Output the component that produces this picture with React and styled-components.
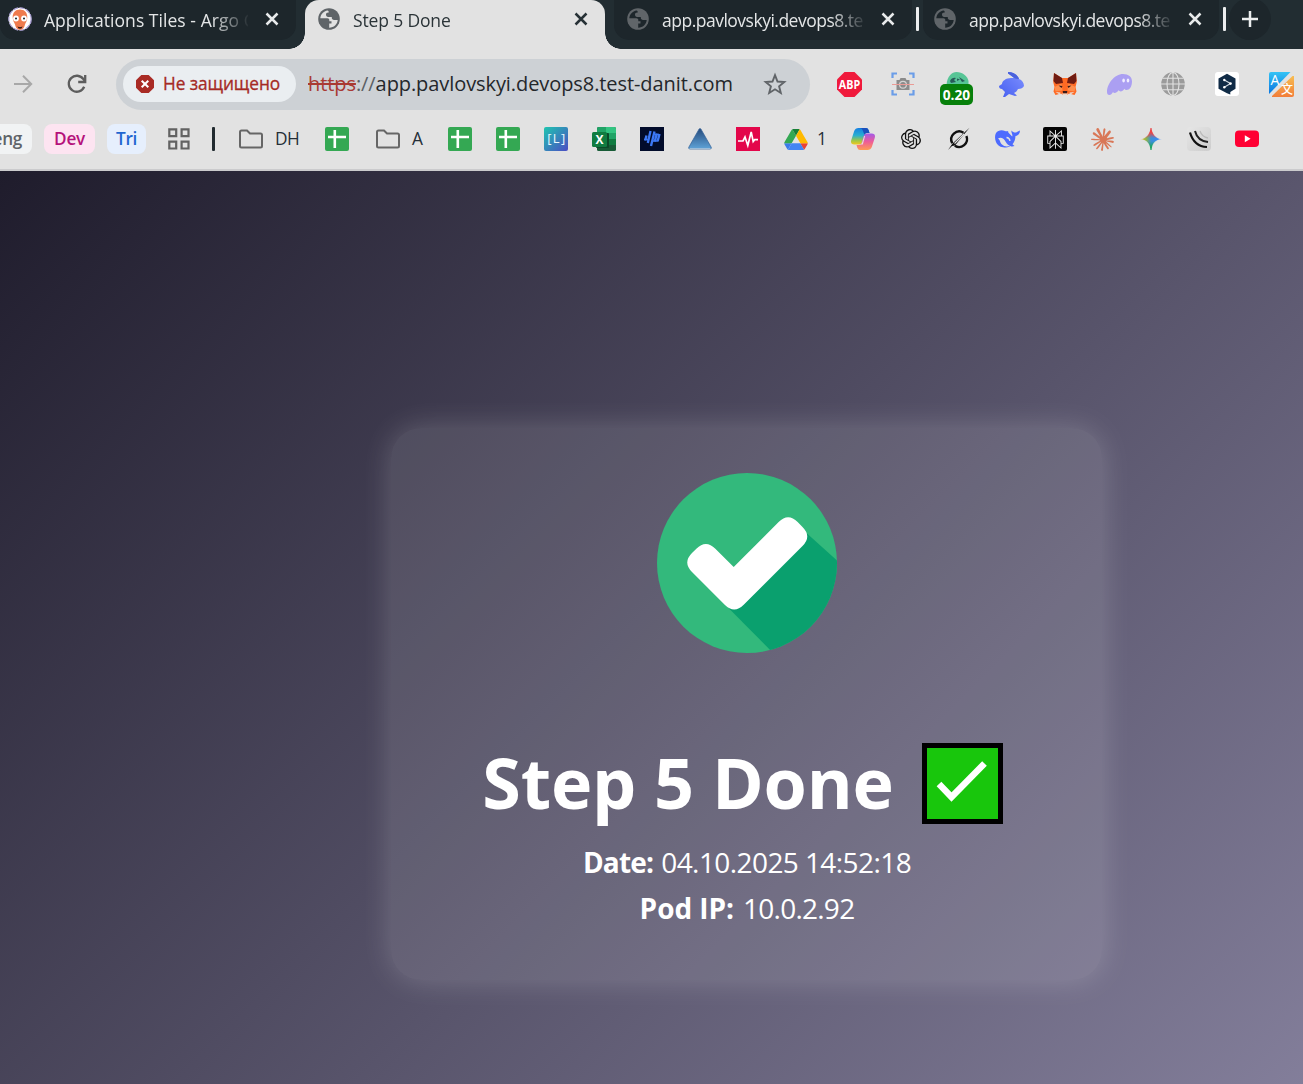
import React from "react";
import styled, { createGlobalStyle, css } from "styled-components";
import { SiOpenai, SiPerplexity, SiClaude, SiGooglegemini } from "react-icons/si";

const Global = createGlobalStyle`
  * { box-sizing: border-box; }
  body { margin: 0; overflow: hidden; background: #1f1c2c; font-family: "Open Sans", "Noto Sans", sans-serif; }
  svg { display: block; flex: none; }
`;

const Browser = styled.div`
  width: 1303px;
  height: 1084px;
  overflow: hidden;
  display: flex;
  flex-direction: column;
`;

/* ---------- tab strip ---------- */
const TabStrip = styled.div`
  flex: none;
  height: 49px;
  display: flex;
  align-items: flex-start;
  background: #222d32;
`;

const Tab = styled.div`
  flex: none;
  display: flex;
  align-items: center;
  width: ${(p) => p.$width}px;
  height: 40px;
  padding: 0 17px 2px ${(p) => p.$lead}px;
  color: #e4e6e7;
  background: #1d262b;
  border-radius: 0 0 15px 15px;
  ${(p) =>
    p.$active &&
    css`
      position: relative;
      height: 49px;
      margin: 0 9px;
      padding-bottom: 11px;
      color: #2b3438;
      background: #e2e2e2;
      border-radius: 14px 14px 0 0;
      &::before,
      &::after {
        content: "";
        position: absolute;
        bottom: 0;
        width: 16px;
        height: 16px;
      }
      &::before {
        left: -16px;
        background: radial-gradient(circle at 0 0, transparent 15.5px, #e2e2e2 16px);
      }
      &::after {
        right: -16px;
        background: radial-gradient(circle at 100% 0, transparent 15.5px, #e2e2e2 16px);
      }
    `}
`;

const TabTitle = styled.span`
  flex: none;
  width: 204px;
  margin-left: ${(p) => p.$gap || 13}px;
  overflow: hidden;
  white-space: nowrap;
  font-size: 17.5px;
  line-height: 30px;
  padding-top: 2px;
  letter-spacing: ${(p) => p.$track}px;
  mask-image: linear-gradient(90deg, #000 168px, transparent 206px);
`;

const CloseSlot = styled.span`
  margin-left: auto;
`;

const Divider = styled.span`
  flex: none;
  width: 3px;
  height: 24px;
  margin: 7px 4px 0;
  border-radius: 1px;
  background: #eceeef;
`;

const NewTab = styled.div`
  flex: none;
  display: flex;
  align-items: center;
  justify-content: center;
  width: 42px;
  height: 42px;
  margin: -2px 0 0 -1px;
  border-radius: 50%;
  background: #1d262b;
`;

/* ---------- toolbar ---------- */
const Toolbar = styled.div`
  flex: none;
  display: flex;
  align-items: center;
  height: 70px;
  padding-left: 10px;
  background: #e2e2e2;
`;

const NavButton = styled.span`
  display: flex;
  justify-content: center;
  width: 26px;
  margin-right: ${(p) => p.$after}px;
`;

const AddressBar = styled.div`
  flex: none;
  display: flex;
  align-items: center;
  width: 694px;
  height: 51px;
  padding: 0 23px 0 7px;
  border-radius: 26px;
  background: #cdd1d5;
`;

const SecurityChip = styled.div`
  display: flex;
  align-items: center;
  width: 173px;
  height: 36px;
  padding-left: 13px;
  border-radius: 18px;
  background: #eaeef1;
  color: #a52a24;
  font-size: 17.3px;
  font-weight: 500;
  line-height: 34px;
  letter-spacing: -0.08px;
  gap: 9px;
  white-space: nowrap;
  -webkit-text-stroke: 0.3px #a52a24;
`;

const Url = styled.div`
  margin-left: 12px;
  padding-bottom: 1px;
  font-size: 20px;
  line-height: 34px;
  letter-spacing: -0.08px;
  color: #24272b;
  white-space: nowrap;
`;
const Scheme = styled.span`
  color: #a93a33;
  text-decoration: line-through;
  text-decoration-thickness: 1.5px;
`;
const Slashes = styled.span`
  color: #5b6064;
`;
const Star = styled.span`
  margin-left: auto;
`;

const Extensions = styled.div`
  display: grid;
  grid-template-columns: repeat(9, 24px);
  align-items: center;
  justify-items: center;
  gap: 30px;
  margin-left: 27px;
`;

const PriceExtension = styled.div`
  position: relative;
  width: 24px;
  height: 24px;
`;
const PriceBadge = styled.span`
  position: absolute;
  left: -5px;
  top: 12px;
  width: 33px;
  height: 21px;
  border-radius: 5px;
  background: #07800b;
  color: #fff;
  font-size: 13.7px;
  font-weight: 700;
  line-height: 22px;
  text-align: center;
`;

/* ---------- bookmarks ---------- */
const Bookmarks = styled.div`
  flex: none;
  display: flex;
  align-items: center;
  height: 52px;
  padding-bottom: 10px;
  border-bottom: 2px solid #cbcbcd;
  background: #e2e2e2;
`;

const GroupChip = styled.span`
  flex: none;
  display: flex;
  justify-content: ${(p) => (p.$clipped ? "flex-end" : "center")};
  width: ${(p) => p.$width}px;
  height: 30px;
  margin-right: 12px;
  padding-right: ${(p) => (p.$clipped ? 10 : 0)}px;
  overflow: hidden;
  border-radius: ${(p) => (p.$clipped ? "0 8px 8px 0" : "8px")};
  background: ${(p) => p.$bg};
  color: ${(p) => p.$fg};
  font-size: 17.2px;
  font-weight: 600;
  line-height: 30px;
  letter-spacing: -0.3px;
`;

const GridSlot = styled.span`
  margin: 0 22px 0 10px;
`;
const Bar = styled.span`
  flex: none;
  width: 3px;
  height: 24px;
  margin-right: 24px;
  border-radius: 1px;
  background: #222b30;
`;
const BookmarkList = styled.div`
  display: flex;
  align-items: center;
  gap: 24px;
`;
const Bookmark = styled.span`
  display: flex;
  align-items: center;
  gap: ${(p) => p.$gap || 0}px;
  width: ${(p) => p.$width || 24}px;
  padding-left: ${(p) => p.$indent || 0}px;
  font-size: 17.3px;
  line-height: 28px;
  letter-spacing: -0.5px;
  color: #252f38;
`;
const Label = styled.span`
  margin-top: -1px;
`;

/* ---------- page ---------- */
const Page = styled.main`
  flex: none;
  display: flex;
  align-items: center;
  justify-content: center;
  width: 1493px;
  height: 1065px;
  background: linear-gradient(135deg, #1f1c2c, #928dab);
`;

const Card = styled.section`
  display: flex;
  flex-direction: column;
  align-items: center;
  width: 711px;
  height: 552px;
  padding-top: 45px;
  border-radius: 30px;
  background: rgba(255, 255, 255, 0.1);
  box-shadow: 0 0 30px rgba(255, 255, 255, 0.2);
  color: #fff;
`;

const Heading = styled.h1`
  display: flex;
  align-items: center;
  gap: 28px;
  margin: 81px 0 9px;
  padding-right: 8px;
  font-size: 70px;
  font-weight: 700;
  line-height: 96px;
  letter-spacing: -0.2px;
  white-space: nowrap;
`;

const DoneMark = styled.span`
  display: flex;
  align-items: center;
  justify-content: center;
  width: 81px;
  height: 81px;
  margin-top: 3px;
  border: 5px solid #000;
  background: #18c60c;
`;

const Detail = styled.p`
  display: flex;
  gap: ${(p) => p.$gap}px;
  margin: 0;
  padding-left: 1px;
  font-size: 28px;
  line-height: 46px;
  letter-spacing: ${(p) => p.$track}px;
  white-space: nowrap;
`;
const Term = styled.strong`
  font-weight: 700;
  letter-spacing: ${(p) => p.$track}px;
`;

/* ---------- icons ---------- */
const Close = ({ color = "#e8eaeb" }) => (
  <svg width="14" height="14" viewBox="0 0 14 14" stroke={color} strokeWidth="2.500">
    <path d="M1.500 1.500l11 11M12.500 1.500l-11 11" />
  </svg>
);

const Globe = ({ ink, paper }) => (
  <svg width="22" height="22" viewBox="0 0 22 22">
    <circle cx="11" cy="11" r="10.800" fill={ink} />
    <path fill={paper} d="M9.600 2.400C5.500 3 2.500 6.400 2.300 10.200h7.200c1.100 0 1.800.700 1.800 1.800v1.300h2.200V15.600h-2.300v4.100c4.600 0 8.200-3.400 8.500-7.700h-3.600c-1.500 0-2.300-.900-2.300-2.200V8.900h-3.700c-1.300 0-2.100-.900-2.100-2.100 0-1.400.8-2.300 2.200-2.300h.6c.1-1-.400-1.700-1.200-2.100z" />
  </svg>
);

const Argo = () => (
  <svg width="24" height="24" viewBox="0 0 24 24">
    <circle cx="12" cy="12" r="11.200" fill="#fff" stroke="#a99fd2" strokeWidth="1.300" strokeDasharray="5 1.500" />
    <path fill="#ef7b4d" d="M12 2.600c-4.800 0-7.300 3.400-7.300 7.600 0 3.600 1.600 5 2.400 7.600.7 2.600 1.600 5 4.900 5s4.200-2.400 4.900-5c.8-2.600 2.400-4 2.400-7.600 0-4.200-2.500-7.600-7.300-7.600z" />
    <circle cx="8" cy="11.500" r="2.900" fill="#fff" />
    <circle cx="16" cy="11.500" r="2.900" fill="#fff" />
    <circle cx="8" cy="11.600" r="1" fill="#14232b" />
    <circle cx="16" cy="11.600" r="1" fill="#14232b" />
    <path d="M9.500 19.200q2.500 1.800 5 0q-.3 2.600-2.500 2.600t-2.500-2.600z" fill="#3b1d18" />
  </svg>
);

const Forward = () => (
  <svg width="20" height="20" viewBox="0 0 20 20" fill="none" stroke="#a8a8a8" strokeWidth="2">
    <path d="M1 10h17M10 1.800L18.200 10 10 18.200" />
  </svg>
);

const Reload = () => (
  <svg width="20" height="20" viewBox="0 0 20 20" fill="none" stroke="#5d5d5d" strokeWidth="2.300">
    <path d="M17.200 12.800A8 8 0 1 1 16.400 5.200L18.300 7.400" />
    <path d="M18.200 1v7h-7" />
  </svg>
);

const Unsafe = () => (
  <svg width="18" height="18" viewBox="0 0 18 18">
    <path d="M5.300 0h7.400L18 5.300v7.400L12.700 18H5.300L0 12.700V5.300z" fill="#a92b25" />
    <path d="M5.700 5.700l6.600 6.600M12.300 5.700l-6.600 6.600" stroke="#fff" strokeWidth="2" />
  </svg>
);

const StarIcon = () => (
  <svg width="24" height="24" viewBox="0 0 24 24" fill="none" stroke="#606468" strokeWidth="1.900">
    <path d="M12 3.200l2.500 6.300 6.800.5-5.200 4.300 1.700 6.700-5.800-3.700L6.200 21l1.700-6.700L2.700 10l6.800-.5z" />
  </svg>
);

const AbpText = styled.text`
  font: 700 11.500px "Open Sans", sans-serif;
  fill: #fff;
`;
const Abp = () => (
  <svg width="25" height="25" viewBox="0 0 25 25">
    <path d="M7.500 0h10L25 7.500v10L17.500 25h-10L0 17.500v-10z" fill="#f01a3c" />
    <AbpText x="1.800" y="16.700" textLength="21.400" lengthAdjust="spacingAndGlyphs">ABP</AbpText>
  </svg>
);

const Capture = () => (
  <svg width="24" height="24" viewBox="0 0 24 24">
    <path d="M1.500 6V1.500H6M18 1.500h4.500V6M1.500 18v4.500H6M18 22.500h4.500V18" fill="none" stroke="#6b9de8" strokeWidth="2.200" />
    <path d="M5.500 8h3l1-2h5l1 2h3v10h-13z" fill="#8b8b8b" />
    <circle cx="12" cy="12.800" r="3.400" fill="none" stroke="#d3d3d3" strokeWidth="1.200" />
    <path d="M1 12.500h22" stroke="#ea9b96" strokeWidth="1" />
  </svg>
);

const Gecko = () => (
  <svg width="24" height="24" viewBox="0 0 24 24">
    <path d="M1.500 13C2 4 7 0 11.500 0c6 0 11 4 12 9v4z" fill="#57c596" />
    <path d="M5 9q2-4 6-3l-2 2 2 2-5 1zM14 5l6 4-3 1z" fill="#285b59" />
    <path d="M12 6.500l3 1-3 1.500z" fill="#285b59" />
  </svg>
);

const Rabbit = () => (
  <svg width="25" height="25" viewBox="0 0 25 25">
    <defs>
      <linearGradient id="rabbit" x1="0" y1="1" x2="1" y2="0">
        <stop offset="0" stopColor="#465ff0" />
        <stop offset="1" stopColor="#7f91ff" />
      </linearGradient>
    </defs>
    <path fill="url(#rabbit)" d="M9 0c5 0 10 3 11 7 3 1 5 4 5 7-1 2-3 3-6 3-1 2-2 3-4 4l3 2.500-2 .5-6-2-4 3H4l2-5-3-3c-2 0-3-1-3-3l3-2c0-3 4-6 9-6h3C13 4 11 3 9 1.500z" />
    <path fill="#4a62dc" d="M9 0c5 0 10 3 11 7l-4-.500C13 4 11 3 9 1.500z" />
  </svg>
);

const Fox = () => (
  <svg width="24" height="24" viewBox="0 0 24 24">
    <path fill="#ff6a24" d="M1 1l8 5h6l8-5 .8 9-1.300 5 1 4.500-2 3.500-5.500-1.500-2 1.500h-4l-2-1.500L2.500 23l-2-3.500 1-4.500L.2 10z" />
    <path fill="#6f1c12" d="M1 1l8 5 1 5-7 1-2.500-3zM23 1l-8 5-1 5 7 1 2.500-3z" />
    <path fill="#ff8e4d" d="M1.500 15l7-3.500 1 7-7 1zM22.500 15l-7-3.500-1 7 7 1z" />
    <path fill="#3a1b1a" d="M5.500 13.500l4 .5-1 2zM18.500 13.500l-4 .5 1 2zM9.700 19h4.600l-.4 2.400h-3.800z" />
    <path fill="#ead8cc" d="M9 21.500h6l-1 1.800h-4zM2.500 20l5 .5-1 2zM21.500 20l-5 .5 1 2z" />
  </svg>
);

const Phantom = () => (
  <svg width="25" height="21" viewBox="0 0 25 21">
    <path fill="#ab9ff2" d="M16 0c5.500 0 9 2.800 9 7.500 0 5-2.500 8.500-5.500 8.500-1 0-1.700-.4-2.200-1.200-1 1.700-2.300 2.600-3.600 2.600-1 0-1.700-.4-2.100-1.100C10.300 18 8.900 19 7.600 19c-.8 0-1.300-.3-1.600-.9C5 20 3.700 21 2.400 21 .8 21 0 20 0 18 0 10 7.500 0 16 0z" />
    <ellipse cx="16.600" cy="6.500" rx="1.300" ry="1.900" fill="#f0edff" />
    <ellipse cx="21" cy="6.500" rx="1.300" ry="1.900" fill="#f0edff" />
  </svg>
);

const WireGlobe = () => (
  <svg width="24" height="24" viewBox="0 0 24 24" fill="none" stroke="#e2e2e2" strokeWidth="1.100">
    <circle cx="12" cy="12" r="11.800" fill="#9b9b9b" stroke="none" />
    <path d="M12 0v24M0 12h24M1.500 6.200h21M1.500 17.800h21" />
    <ellipse cx="12" cy="12" rx="6" ry="11.500" />
  </svg>
);

const Deepl = () => (
  <svg width="24" height="24" viewBox="0 0 24 24">
    <rect width="24" height="24" rx="3" fill="#fff" />
    <path d="M12 1.800l8.500 4.700v10.300L15.300 20v2.500L12 21.200 3.500 16.800V6.500z" fill="#102b46" />
    <path d="M9.300 8l6.200 3.600-6.200 3.600" fill="none" stroke="#cfd8e0" strokeWidth="1.100" />
    <circle cx="9.300" cy="8" r="1.200" fill="#fff" />
    <circle cx="15.500" cy="11.600" r="1.300" fill="#fff" />
    <circle cx="9.300" cy="15.200" r="1.200" fill="#fff" />
  </svg>
);

const LatinGlyph = styled.text`
  font: 500 14px "Open Sans", sans-serif;
  fill: #fff;
`;
const HanGlyph = styled.text`
  font: 500 12px "Noto Sans CJK SC", sans-serif;
  fill: #fff;
`;
const Translate = () => (
  <svg width="25" height="25" viewBox="0 0 25 25">
    <defs>
      <linearGradient id="trBlue" x1="0" y1="0" x2="0" y2="1">
        <stop offset="0" stopColor="#35c3f5" />
        <stop offset="1" stopColor="#0875e0" />
      </linearGradient>
      <linearGradient id="trOrange" x1="0" y1="0" x2="0" y2="1">
        <stop offset="0" stopColor="#f7bd52" />
        <stop offset="1" stopColor="#f27d38" />
      </linearGradient>
    </defs>
    <path d="M2 0h19.500L0 22V2q0-2 2-2z" fill="url(#trBlue)" />
    <path d="M23.500 4H25v19q0 2-2 2H3v-1z" fill="url(#trOrange)" />
    <LatinGlyph x="1.500" y="12.500">A</LatinGlyph>
    <HanGlyph x="12" y="22">文</HanGlyph>
  </svg>
);

const Grid = () => (
  <svg width="22" height="22" viewBox="0 0 22 22" fill="none" stroke="#626262" strokeWidth="2.200">
    <path d="M1.300 1.300h6.900v6.900H1.300zM13.600 1.300h6.900v6.900h-6.900zM1.300 13.600h6.900v6.900H1.300zM13.600 13.600h6.900v6.900h-6.900z" />
  </svg>
);

const Folder = () => (
  <svg width="24" height="20" viewBox="0 0 24 20" fill="none" stroke="#666" strokeWidth="2">
    <path d="M1 3Q1 1.500 2.500 1.500H8l3 3h10.500Q23 4.500 23 6v11q0 1.500-1.500 1.500h-19Q1 18.500 1 17z" />
  </svg>
);

const Sheet = () => (
  <svg width="24" height="24" viewBox="0 0 24 24">
    <rect width="24" height="24" rx="2" fill="#34a853" />
    <path d="M9.800 3v18M3 10h18" stroke="#fff" strokeWidth="2.600" />
  </svg>
);

const BracketText = styled.text`
  font: 400 13px "Open Sans", sans-serif;
  fill: #eaf8ff;
`;
const Bracket = () => (
  <svg width="24" height="24" viewBox="0 0 24 24">
    <defs>
      <linearGradient id="bracket" x1="0" y1="0" x2="1" y2="1">
        <stop offset="0" stopColor="#1fc5b0" />
        <stop offset="1" stopColor="#4b4cc4" />
      </linearGradient>
    </defs>
    <rect width="24" height="24" rx="2" fill="url(#bracket)" />
    <BracketText x="3.200" y="16" textLength="17.500">[L]</BracketText>
  </svg>
);

const ExcelLetter = styled.text`
  font: 700 12px "Open Sans", sans-serif;
  fill: #fff;
`;
const Excel = () => (
  <svg width="24" height="24" viewBox="0 0 24 24">
    <rect x="5" width="19" height="24" rx="1.500" fill="#185c37" />
    <path d="M6.500 0H14v6H5V1.500Q5 0 6.500 0zM5 6h9v6H5z" fill="#21a366" />
    <path d="M14 0h8.500Q24 0 24 1.500V6H14z" fill="#33c481" />
    <path d="M14 6h10v6H14z" fill="#21a366" />
    <path d="M14 12h10v6H14z" fill="#107c41" />
    <rect x="4" y="6" width="13" height="15" rx="1" fill="#0b4a29" />
    <rect y="5" width="15" height="15" rx="1.500" fill="#107c41" />
    <ExcelLetter x="3.600" y="16.800">X</ExcelLetter>
  </svg>
);

const Bars = () => (
  <svg width="24" height="24" viewBox="0 0 24 24" stroke="#3c78f5" strokeWidth="2.400">
    <rect width="24" height="24" fill="#020c2b" stroke="none" />
    <path d="M6.500 8.500l-1.300 5M10.500 4l-2.700 12M14.500 4.500L11 19M16.800 6.500l-2 8M19.500 7l-1.800 7" />
    <path d="M4 12.500h5M13 14h5.500M15 7.500h4" strokeWidth="1.400" />
  </svg>
);

const Triangle = () => (
  <svg width="24" height="24" viewBox="0 0 24 24">
    <defs>
      <linearGradient id="tri" x1="0" y1="0" x2="0" y2="1">
        <stop offset="0" stopColor="#254a7c" />
        <stop offset="1" stopColor="#5fa3d8" />
      </linearGradient>
    </defs>
    <path d="M11 2.200q1-1.500 2 0l10.200 18q.6 1.800-1.200 1.800H2q-1.800 0-1.200-1.800z" fill="url(#tri)" stroke="#315f96" strokeWidth=".7" />
    <path d="M1.500 21.500h21" stroke="#9bbcd9" strokeWidth="1" />
  </svg>
);

const Pulse = () => (
  <svg width="24" height="24" viewBox="0 0 24 24">
    <rect width="24" height="24" fill="#e3064a" />
    <path d="M2 14h5l2-4 2.800 8.500L15.200 5l2 9.500 1.500-1.800H22" fill="none" stroke="#fff" strokeWidth="1.700" />
  </svg>
);

const Drive = () => (
  <svg width="24" height="21" viewBox="0 0 87.300 78">
    <path d="M6.600 66.850l3.850 6.650c.8 1.400 1.950 2.500 3.300 3.300L27.500 53H0c0 1.550.4 3.100 1.200 4.500z" fill="#3b7bea" />
    <path d="M43.650 25L29.900 1.200c-1.350.8-2.500 1.900-3.300 3.300L1.200 48.500A9.060 9.060 0 0 0 0 53h27.500z" fill="#34a853" />
    <path d="M73.550 76.800c1.350-.8 2.500-1.900 3.300-3.300l1.600-2.750 7.650-13.250c.8-1.400 1.200-2.950 1.200-4.500H59.800l5.850 11.500z" fill="#ea4335" />
    <path d="M43.650 25L57.400 1.200C56.050.4 54.500 0 52.900 0H34.400c-1.600 0-3.150.45-4.500 1.200z" fill="#188038" />
    <path d="M59.800 53H27.500L13.750 76.800c1.350.8 2.900 1.200 4.500 1.200h50.800c1.600 0 3.150-.45 4.500-1.200z" fill="#4285f4" />
    <path d="M73.400 26.500L60.700 4.500c-.8-1.400-1.950-2.500-3.300-3.300L43.650 25 59.800 53h27.450c0-1.550-.4-3.100-1.200-4.500z" fill="#ffba00" />
  </svg>
);

const Copilot = () => (
  <svg width="24" height="22" viewBox="0 0 24 22">
    <defs>
      <linearGradient id="cpA" x1="0" y1="0" x2="0" y2="1">
        <stop offset="0" stopColor="#167fe2" />
        <stop offset=".45" stopColor="#28afd0" />
        <stop offset=".75" stopColor="#9bc64a" />
        <stop offset="1" stopColor="#f3c81d" />
      </linearGradient>
      <linearGradient id="cpB" x1="0" y1="0" x2="0" y2="1">
        <stop offset="0" stopColor="#a35be8" />
        <stop offset=".5" stopColor="#ee5c98" />
        <stop offset="1" stopColor="#ff9b54" />
      </linearGradient>
    </defs>
    <path d="M7.500 0H15q2 0 2.700 2.200L18.500 5H16q-2 0-2.600 2l-2 7q-.8 2.500-3.400 2.500H3.300Q-.8 16.500.2 12.300L3.200 3Q4.300 0 7.500 0z" fill="url(#cpA)" />
    <path d="M15 0q2 0 2.700 2.200L18.500 5H16q-2 0-2.600 2L12 3q-.8-3-3-3z" fill="#1b50bc" />
    <path d="M16.500 22H9q-2 0-2.700-2.200L5.500 17H8q2 0 2.600-2l2-7q.8-2.500 3.400-2.500h4.700q4.100 0 3.100 4.200l-3 9.300q-1.100 3-4.300 3z" fill="url(#cpB)" />
    <path d="M11.300 14l1.800-6h1l-2.300 8.500H9.200q1.500-.5 2.100-2.500z" fill="#e2e2e2" />
  </svg>
);

const Grok = () => (
  <svg width="24" height="24" viewBox="0 0 24 24" fill="none" stroke="#111" strokeWidth="2.400">
    <path d="M16.500 5.700A8 8 0 0 0 5.200 16.200M7.800 18.800A8 8 0 0 0 19.400 9" />
    <path d="M1 23l4.500-6.500L22.500.8 8 18.500 5 19z" fill="#111" stroke="none" />
    <path d="M7.500 16.500L17 7" stroke="#e2e2e2" strokeWidth="1.300" />
  </svg>
);

const Whale = () => (
  <svg width="25" height="20" viewBox="0 0 25 20">
    <path fill="#4d6bfe" d="M1 4c2-3 6-3.500 9-2 1.500.7 2 0 3.200 0-.4 1 .3 1.800 1.500 3l2.500 2.500C18 5.500 16 4 16.500 1.500c1.200 1.500 2.500 2 3.500 2 2 0 3-1.500 5-2-.2 3.500-2 5-4.500 5.500-.2 4-1.500 6.500-3 8.300l2 1.700c-1.500.5-3 .6-4.200-.1C10 19.800 3 18.500 1 13-.2 10-.4 6.500 1 4z" />
    <path d="M3 9.500c3-2 6 .2 7.500 3s3 4 4.500 4.200c-3 1.300-6 .7-8-1.200-2.300-2-1.300-4-4-6z" fill="#e2e2e2" />
    <path d="M11.500 8.500q3 .2 3.500 3.500" fill="none" stroke="#e2e2e2" strokeWidth="1.300" />
  </svg>
);

const PerplexityTile = styled.span`
  display: flex;
  align-items: center;
  justify-content: center;
  width: 24px;
  height: 24px;
  border-radius: 2px;
  color: #eee;
  background: #050505;
`;

const GeminiIcon = () => (
  <svg width="22" height="22" viewBox="0 0 24 24">
    <defs>
      <linearGradient id="gmA" x1="0" y1=".5" x2="1" y2=".5">
        <stop offset="0" stopColor="#f5bd18" />
        <stop offset=".28" stopColor="#8fb44a" />
        <stop offset=".5" stopColor="#3b90d8" />
        <stop offset="1" stopColor="#3a86ff" />
      </linearGradient>
      <linearGradient id="gmR" x1=".5" y1="0" x2=".5" y2="1">
        <stop offset="0" stopColor="#ef4444" />
        <stop offset=".2" stopColor="#ef4444" />
        <stop offset=".46" stopColor="#ef4444" stopOpacity="0" />
        <stop offset=".6" stopColor="#17a35b" stopOpacity="0" />
        <stop offset=".9" stopColor="#17a35b" />
      </linearGradient>
    </defs>
    <g stroke="url(#gmA)" strokeWidth="1.200">
      <SiGooglegemini size={24} fill="url(#gmA)" />
    </g>
    <g>
      <SiGooglegemini size={24} fill="url(#gmR)" stroke="url(#gmR)" strokeWidth="1.200" />
    </g>
  </svg>
);

const Curves = () => (
  <svg width="24" height="24" viewBox="0 0 24 24" fill="none">
    <defs>
      <linearGradient id="curveTile" x1="0" y1="0" x2="1" y2="1">
        <stop offset="0" stopColor="#e6e6e6" />
        <stop offset="1" stopColor="#cdcdcd" />
      </linearGradient>
    </defs>
    <rect width="24" height="24" rx="4" fill="url(#curveTile)" />
    <path d="M3 5.500Q7 19.500 20 20" stroke="#111" strokeWidth="2.200" />
    <path d="M8 4Q10.500 14 21 15" stroke="#222" strokeWidth="2" />
    <path d="M13 4Q15 10 21 11" stroke="#bbb" strokeWidth="1.300" />
  </svg>
);

const Youtube = () => (
  <svg width="24" height="18" viewBox="0 0 24 18">
    <rect y=".5" width="24" height="16.500" rx="4" fill="#ff0033" />
    <path d="M9.800 5.200l5.800 3.500-5.800 3.500z" fill="#fff" />
  </svg>
);

const SuccessLogo = () => (
  <svg width="180" height="180" viewBox="0 0 180 180">
    <defs>
      <clipPath id="disc">
        <circle cx="90" cy="90" r="90" />
      </clipPath>
    </defs>
    <circle cx="90" cy="90" r="90" fill="#33b97c" />
    <path d="M72 135.500L150 60.500 190 96.500V190H126z" fill="#0aa06e" clipPath="url(#disc)" />
    <path
      fill="#fff"
      d="M35 99Q25.500 89.500 35 80L39.350 75.650Q48.850 66.150 58.350 75.650L76.700 94 121.650 49.050Q131.150 39.550 140.650 49.050L145.500 53.900Q155 63.400 145.500 72.900L86.700 131.700Q77.200 141.200 67.700 131.700z"
    />
  </svg>
);

export default function App() {
  return (
    <Browser>
      <Global />
      <TabStrip>
        <Tab $width={296} $lead={8}>
          <Argo />
          <TabTitle $gap={12} $track={0.05}>Applications Tiles - Argo C</TabTitle>
          <CloseSlot><Close /></CloseSlot>
        </Tab>
        <Tab $active $width={300} $lead={13}>
          <Globe ink="#5f6468" paper="#e2e2e2" />
          <TabTitle $track={-0.15}>Step 5 Done</TabTitle>
          <CloseSlot><Close color="#273136" /></CloseSlot>
        </Tab>
        <Tab $width={298} $lead={13}>
          <Globe ink="#606569" paper="#1d262b" />
          <TabTitle $track={-0.5}>app.pavlovskyi.devops8.te</TabTitle>
          <CloseSlot><Close /></CloseSlot>
        </Tab>
        <Divider />
        <Tab $width={296} $lead={11}>
          <Globe ink="#606569" paper="#1d262b" />
          <TabTitle $track={-0.5}>app.pavlovskyi.devops8.te</TabTitle>
          <CloseSlot><Close /></CloseSlot>
        </Tab>
        <Divider />
        <NewTab>
          <svg width="16" height="16" viewBox="0 0 16 16" stroke="#eceeef" strokeWidth="2.500">
            <path d="M8 0v16M0 8h16" />
          </svg>
        </NewTab>
      </TabStrip>

      <Toolbar>
        <NavButton $after={28}><Forward /></NavButton>
        <NavButton $after={26}><Reload /></NavButton>
        <AddressBar>
          <SecurityChip>
            <Unsafe />
            Не защищено
          </SecurityChip>
          <Url>
            <Scheme>https</Scheme>
            <Slashes>://</Slashes>
            app.pavlovskyi.devops8.test-danit.com
          </Url>
          <Star><StarIcon /></Star>
        </AddressBar>
        <Extensions>
          <Abp />
          <Capture />
          <PriceExtension>
            <Gecko />
            <PriceBadge>0.20</PriceBadge>
          </PriceExtension>
          <Rabbit />
          <Fox />
          <Phantom />
          <WireGlobe />
          <Deepl />
          <Translate />
        </Extensions>
      </Toolbar>

      <Bookmarks>
        <GroupChip $clipped $width={32} $bg="#f1f3f4" $fg="#5f6368">eng</GroupChip>
        <GroupChip $width={51} $bg="#fde4f1" $fg="#b5127b">Dev</GroupChip>
        <GroupChip $width={39} $bg="#e6effd" $fg="#1f66d0">Tri</GroupChip>
        <GridSlot><Grid /></GridSlot>
        <Bar />
        <BookmarkList>
          <Bookmark $width={62} $gap={12}><Folder /><Label>DH</Label></Bookmark>
          <Bookmark><Sheet /></Bookmark>
          <Bookmark $width={51} $gap={12} $indent={3}><Folder /><Label>A</Label></Bookmark>
          <Bookmark><Sheet /></Bookmark>
          <Bookmark><Sheet /></Bookmark>
          <Bookmark><Bracket /></Bookmark>
          <Bookmark><Excel /></Bookmark>
          <Bookmark><Bars /></Bookmark>
          <Bookmark><Triangle /></Bookmark>
          <Bookmark><Pulse /></Bookmark>
          <Bookmark $width={43} $gap={9}><Drive /><Label>1</Label></Bookmark>
          <Bookmark><Copilot /></Bookmark>
          <Bookmark $indent={2}><SiOpenai size={20} color="#111" /></Bookmark>
          <Bookmark><Grok /></Bookmark>
          <Bookmark><Whale /></Bookmark>
          <Bookmark><PerplexityTile><SiPerplexity size={19} /></PerplexityTile></Bookmark>
          <Bookmark><SiClaude size={23} color="#d97757" /></Bookmark>
          <Bookmark $indent={1}><GeminiIcon /></Bookmark>
          <Bookmark><Curves /></Bookmark>
          <Bookmark><Youtube /></Bookmark>
        </BookmarkList>
      </Bookmarks>

      <Page>
        <Card>
          <SuccessLogo />
          <Heading>
            Step 5 Done
            <DoneMark>
              <svg width="71" height="71" viewBox="0 0 71 71" fill="none" stroke="#fff" strokeWidth="6.500">
                <path d="M12 36L24.500 49 57.500 15.500" />
              </svg>
            </DoneMark>
          </Heading>
          <Detail $gap={8} $track={-0.58}>
            <Term $track={-0.8}>Date:</Term>
            <span>04.10.2025 14:52:18</span>
          </Detail>
          <Detail $gap={9} $track={-0.75}>
            <Term $track={-0.05}>Pod IP:</Term>
            <span>10.0.2.92</span>
          </Detail>
        </Card>
      </Page>
    </Browser>
  );
}
